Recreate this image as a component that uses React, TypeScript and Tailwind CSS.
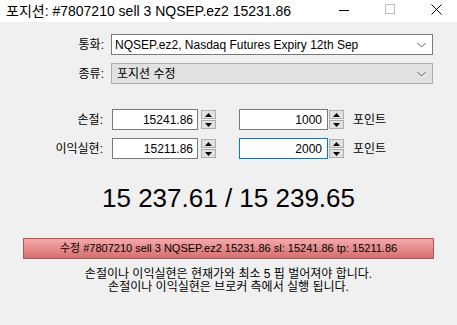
import React from "react";

const FONT = '"Liberation Sans", "Noto Sans CJK KR", sans-serif';

function Chevron() {
  return (
    <svg width="9" height="6" viewBox="0 0 9 6" className="mr-[6px]">
      <path d="M0.5 1 L4.5 5 L8.5 1" fill="none" stroke="#606060" strokeWidth="1" />
    </svg>
  );
}

function Spinner() {
  return (
    <div className="flex flex-col w-[15px] h-[19px] gap-[1px]">
      <div className="flex-1 border border-[#adadad] bg-[#e1e1e1] flex items-center justify-center">
        <svg width="7" height="4" viewBox="0 0 7 4"><path d="M3.5 0 L7 4 L0 4 Z" fill="#000" /></svg>
      </div>
      <div className="flex-1 border border-[#adadad] bg-[#e1e1e1] flex items-center justify-center">
        <svg width="7" height="4" viewBox="0 0 7 4"><path d="M0 0 L7 0 L3.5 4 Z" fill="#000" /></svg>
      </div>
    </div>
  );
}

function NumRow({ label, value, points, focused }: { label: string; value: string; points: string; focused?: boolean }) {
  return (
    <div className="flex items-center h-[21px]">
      <div className="w-[104px] text-right pr-[1px] text-[12px] text-black">{label}</div>
      <div className="ml-[8px] w-[86px] h-[21px] border border-[#7a7a7a] bg-white flex items-center justify-end pr-[4px] text-[12px] text-black">
        {value}
      </div>
      <div className="ml-[3px]"><Spinner /></div>
      <div
        className={
          focused
            ? "ml-[23px] w-[89px] h-[21px] border border-[#0078d7] bg-white flex items-center justify-end pr-[5px] text-[12px] text-black"
            : "ml-[23px] w-[89px] h-[21px] border border-[#7a7a7a] bg-white flex items-center justify-end pr-[5px] text-[12px] text-black"
        }
      >
        {points}
      </div>
      <div className="ml-[1px]"><Spinner /></div>
      <div className="ml-[9px] text-[12px] text-black">포인트</div>
    </div>
  );
}

export default function App() {
  return (
    <div className="w-[457px] h-[325px] bg-[#f0f0f0] flex flex-col overflow-hidden" style={{ fontFamily: FONT }}>
      {/* Title bar */}
      <div className="h-[22px] bg-white flex items-center">
        <div className="pl-[6px] text-[14px] text-black flex-1 leading-none">포지션: #7807210 sell 3 NQSEP.ez2 15231.86</div>
        <div className="w-[10px] h-[1px] bg-black mr-[36px] mb-[2px]" />
        <div className="w-[10px] h-[10px] border border-[#bdbdbd] mr-[36px] mb-[4px]" />
        <svg width="11" height="11" viewBox="0 0 11 11" className="mr-[15px] mb-[4px]">
          <path d="M0.5 0.5 L10.5 10.5 M10.5 0.5 L0.5 10.5" stroke="#000" strokeWidth="1" />
        </svg>
      </div>

      {/* Body */}
      <div className="flex flex-col pt-[12px]">
        <div className="flex items-center h-[21px]">
          <div className="w-[104px] text-right text-[12px] text-black">통화:</div>
          <div className="ml-[7px] w-[322px] h-[21px] border border-[#7a7a7a] bg-white flex items-center justify-between pl-[3px]">
            <span className="text-[12px] text-black">NQSEP.ez2, Nasdaq Futures Expiry 12th Sep</span>
            <Chevron />
          </div>
        </div>
        <div className="flex items-center h-[21px] mt-[8px]">
          <div className="w-[104px] text-right text-[12px] text-black">종류:</div>
          <div className="ml-[7px] w-[322px] h-[21px] border border-[#adadad] bg-[#e1e1e1] flex items-center justify-between pl-[5px]">
            <span className="text-[12px] text-black">포지션 수정</span>
            <Chevron />
          </div>
        </div>

        <div className="mt-[25px] flex flex-col gap-[8px]">
          <NumRow label="손절:" value="15241.86" points="1000" />
          <NumRow label="이익실현:" value="15211.86" points="2000" focused />
        </div>

        <div className="mt-[23px] h-[32px] flex items-center justify-center text-[26px] text-black">
          15 237.61 / 15 239.65
        </div>

        <div className="mt-[24px] mx-[23px] h-[21px] border border-[#b85454] bg-gradient-to-b from-[#f4a9a9] to-[#d66e6e] flex items-center justify-center text-[11px] text-black">
          수정 #7807210 sell 3 NQSEP.ez2 15231.86 sl: 15241.86 tp: 15211.86
        </div>

        <div className="mt-[9px] flex flex-col items-center text-[12px] leading-[13px] text-black">
          <div>손절이나 이익실현은 현재가와 최소 5 핍 벌어져야 합니다.</div>
          <div>손절이나 이익실현은 브로커 측에서 실행 됩니다.</div>
        </div>
      </div>
    </div>
  );
}
